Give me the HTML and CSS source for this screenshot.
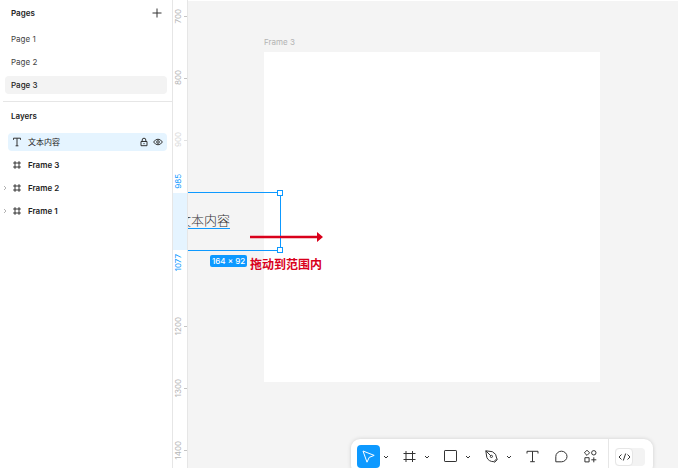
FILE: index.html
```html
<!DOCTYPE html>
<html lang="zh-CN">
<head>
    <meta charset="UTF-8">
    <meta name="viewport" content="width=device-width, initial-scale=1.0">
    <title>Page 3</title>
    <link rel="stylesheet" href="styles.css">
</head>

<body>
    <aside class="sidebar">
        <section class="pages">
            <div class="panel-header">
                <h2>Pages</h2>
                <button class="icon-button" type="button" aria-label="Add page">
                    <svg width="10" height="10" viewBox="0 0 10 10"><path d="M5 .5v9M.5 5h9"/></svg>
                </button>
            </div>
            <nav class="page-list">
                <a class="page" href="#page-1">Page 1</a>
                <a class="page" href="#page-2">Page 2</a>
                <a class="page current" href="#page-3">Page 3</a>
            </nav>
        </section>

        <section class="layers">
            <div class="panel-header">
                <h2>Layers</h2>
            </div>
            <ul class="layer-list">
                <li class="layer selected">
                    <svg width="10" height="10" viewBox="0 0 10 10"><path d="M1.5 2.8V1.2h7v1.6M5 1.2v7.6M3.6 8.8h2.8"/></svg>
                    <span class="layer-name">文本内容</span>
                    <button class="icon-button" type="button" aria-label="Lock">
                        <svg width="10" height="10" viewBox="0 0 10 10"><path d="M2 4.5h6v4.2H2zM3.2 4.5V3a1.8 1.8 0 0 1 3.6 0v1.5M5 6v1.2"/></svg>
                    </button>
                    <button class="icon-button" type="button" aria-label="Hide">
                        <svg width="10" height="10" viewBox="0 0 10 10"><path d="M.6 5Q2.4 2.2 5 2.2T9.4 5Q7.6 7.8 5 7.8T.6 5z"/><circle cx="5" cy="5" r="1.3"/></svg>
                    </button>
                </li>
                <li class="layer">
                    <svg width="10" height="10" viewBox="0 0 10 10"><path d="M3 1.2v7.6M7 1.2v7.6M1.2 3h7.6M1.2 7h7.6"/></svg>
                    <span class="layer-name">Frame 3</span>
                </li>
                <li class="layer">
                    <button class="expand" type="button" aria-label="Expand Frame 2">
                        <svg width="4" height="6" viewBox="0 0 4 6"><path d="M1 1l2 2-2 2"/></svg>
                    </button>
                    <svg width="10" height="10" viewBox="0 0 10 10"><path d="M3 1.2v7.6M7 1.2v7.6M1.2 3h7.6M1.2 7h7.6"/></svg>
                    <span class="layer-name">Frame 2</span>
                </li>
                <li class="layer">
                    <button class="expand" type="button" aria-label="Expand Frame 1">
                        <svg width="4" height="6" viewBox="0 0 4 6"><path d="M1 1l2 2-2 2"/></svg>
                    </button>
                    <svg width="10" height="10" viewBox="0 0 10 10"><path d="M3 1.2v7.6M7 1.2v7.6M1.2 3h7.6M1.2 7h7.6"/></svg>
                    <span class="layer-name">Frame 1</span>
                </li>
            </ul>
        </section>
    </aside>

    <div class="ruler">
        <div class="marks">
            <div class="mark"><span>700</span></div>
            <div class="mark"><span>800</span></div>
            <div class="mark faded"><span>900</span></div>
            <div class="mark hidden"></div>
            <div class="mark hidden"></div>
            <div class="mark"><span>1200</span></div>
            <div class="mark"><span>1300</span></div>
            <div class="mark"><span>1400</span></div>
        </div>
        <div class="range">
            <span class="range-start">985</span>
            <span class="range-end">1077</span>
        </div>
    </div>

    <main class="canvas">
        <div class="frame">
            <span class="frame-label">Frame 3</span>
        </div>

        <div class="selection">
            <span class="text-node">文本内容</span>
            <i class="handle handle-top"></i>
            <i class="handle handle-bottom"></i>
            <span class="size-badge">164 × 92</span>
        </div>

        <div class="note">
            <svg width="73" height="10" viewBox="0 0 73 10"><path d="M0 3.8h67V0l6 5-6 5V6.2H0z"/></svg>
            <p>拖动到范围内</p>
        </div>

        <div class="toolbar">
            <div class="tool-group">
                <button class="tool active" type="button" aria-label="Move">
                    <svg width="15" height="15" viewBox="0 0 15 15"><path d="M2 2l11.2 4.4-5 2L6 13.2z"/></svg>
                </button>
                <button class="more" type="button" aria-label="Move tools">
                    <svg width="6" height="4" viewBox="0 0 6 4"><path d="M1 1l2 2 2-2"/></svg>
                </button>
            </div>
            <div class="tool-group">
                <button class="tool" type="button" aria-label="Frame">
                    <svg width="15" height="15" viewBox="0 0 15 15"><path d="M4 2v11M10.5 2v11M1.5 4.5h12M1.5 10.5h12"/></svg>
                </button>
                <button class="more" type="button" aria-label="Region tools">
                    <svg width="6" height="4" viewBox="0 0 6 4"><path d="M1 1l2 2 2-2"/></svg>
                </button>
            </div>
            <div class="tool-group">
                <button class="tool" type="button" aria-label="Rectangle">
                    <svg width="15" height="15" viewBox="0 0 15 15"><rect x="1.5" y="1.5" width="12" height="11" rx=".6"/></svg>
                </button>
                <button class="more" type="button" aria-label="Shape tools">
                    <svg width="6" height="4" viewBox="0 0 6 4"><path d="M1 1l2 2 2-2"/></svg>
                </button>
            </div>
            <div class="tool-group">
                <button class="tool" type="button" aria-label="Pen">
                    <svg width="15" height="15" viewBox="0 0 15 15"><path d="M1.8 1.8l6.6.9q4.2 1.8 4.4 7L9.8 12.7Q4.6 12.6 2.8 8.4zM1.8 1.8l5 5M9.8 12.7l.9.5 2.6-2.6-.5-.9"/><circle cx="7.4" cy="7.4" r="1.1"/></svg>
                </button>
                <button class="more" type="button" aria-label="Drawing tools">
                    <svg width="6" height="4" viewBox="0 0 6 4"><path d="M1 1l2 2 2-2"/></svg>
                </button>
            </div>
            <button class="tool" type="button" aria-label="Text">
                <svg width="15" height="15" viewBox="0 0 15 15"><path d="M2 4.5V2.3h11v2.2M7.5 2.3v10.4M5.2 12.7h4.6"/></svg>
            </button>
            <button class="tool" type="button" aria-label="Comment">
                <svg width="15" height="15" viewBox="0 0 15 15"><path d="M1.8 12.8V7.5a5.6 5.3 0 1 1 5.6 5.3z"/></svg>
            </button>
            <button class="tool" type="button" aria-label="Actions">
                <svg width="15" height="15" viewBox="0 0 15 15"><path d="M4 1.2l2.6 2.6L4 6.4 1.4 3.8zM1.9 8.7h4.2v4.2H1.9zM10.8 8.3v5M8.3 10.8h5"/><circle cx="10.8" cy="3.8" r="2.2"/></svg>
            </button>
            <label class="dev-mode">
                <input type="checkbox" aria-label="Dev Mode">
                <span class="knob">
                    <svg width="13" height="10" viewBox="0 0 13 10"><path d="M3.5 2.5L1 5l2.5 2.5M9.5 2.5L12 5 9.5 7.5M7.7 1.5l-2.4 7"/></svg>
                </span>
            </label>
        </div>
    </main>
</body>
</html>
```
FILE: styles.css
```css
* {
    box-sizing: border-box;
}

body {
    margin: 0;
    height: 100vh;
    display: flex;
    overflow: hidden;
    font-family: Inter, "Noto Sans CJK SC", sans-serif;
    font-size: 8px;
    line-height: 12px;
    color: #333;
    background: #fff;
}

button {
    display: flex;
    align-items: center;
    justify-content: center;
    padding: 0;
    border: 0;
    background: none;
    color: #333;
}

svg {
    flex: none;
    fill: none;
    stroke: currentColor;
    stroke-linejoin: round;
}

h2 {
    margin: 0;
    font-size: 8px;
    font-weight: 600;
    color: #222;
}

/* Left panel */
.sidebar {
    flex: none;
    width: 173px;
    border-right: 1px solid #e6e6e6;
}

.panel-header {
    display: flex;
    align-items: center;
    justify-content: space-between;
    height: 26px;
    padding: 0 10px 0 11px;
}

.pages {
    height: 102px;
    margin-left: 3px;
    border-bottom: 1px solid #e6e6e6;
}

.pages .panel-header {
    padding-left: 8px;
}

.page-list {
    display: flex;
    flex-direction: column;
    gap: 5px;
    padding: 4px 5px 0 2px;
}

.page {
    height: 18px;
    padding: 3px 6px;
    border-radius: 4px;
    color: #444;
    text-decoration: none;
}

.page.current {
    background: #f3f3f3;
    color: #222;
    font-weight: 500;
}

.layers {
    padding-top: 1px;
}

.layer-list {
    display: flex;
    flex-direction: column;
    gap: 5px;
    margin: 0;
    padding: 4px 5px 0 8px;
    list-style: none;
}

.layer {
    position: relative;
    display: flex;
    align-items: center;
    gap: 4px;
    height: 18px;
    padding: 0 4px;
    border-radius: 4px;
}

.layer.selected {
    background: #e5f4ff;
}

.layer-name {
    flex: 1;
    padding-left: 2px;
    font-weight: 600;
    color: #222;
}

.selected .layer-name {
    font-weight: 400;
}

.expand {
    position: absolute;
    left: -5px;
    color: #b3b3b3;
}

/* Vertical ruler */
.ruler {
    position: relative;
    flex: none;
    width: 15px;
    border-right: 1px solid #e6e6e6;
    line-height: 10px;
    color: #b5b5b5;
}

.marks {
    display: flex;
    flex-direction: column;
    height: calc(100% + 28px);
    margin-top: -15px;
}

.mark {
    flex: 1;
    display: flex;
    align-items: center;
    justify-content: space-between;
}

.mark::after {
    content: "";
    width: 3px;
    height: 1px;
    background: #c4c4c4;
}

.mark.faded {
    opacity: 0.5;
}

.mark.hidden {
    visibility: hidden;
}

.ruler span {
    writing-mode: vertical-rl;
    transform: rotate(180deg);
}

.range {
    position: absolute;
    top: 193px;
    left: 0;
    width: 14px;
    height: 57px;
    background: #e5f4ff;
    color: #0d99ff;
}

.range-start,
.range-end {
    position: absolute;
    left: 0;
}

.range-start {
    bottom: 100%;
    padding-top: 4px;
}

.range-end {
    top: 100%;
    padding-bottom: 4px;
}

/* Canvas */
.canvas {
    position: relative;
    flex: 1;
    margin: 1px 2px 0 0;
    overflow: hidden;
    background: #f4f4f4;
}

.frame {
    position: absolute;
    top: 51px;
    left: 76px;
    width: 336px;
    height: 330px;
    background: #fff;
}

.frame-label {
    position: absolute;
    bottom: 100%;
    left: 0;
    padding-bottom: 4px;
    color: #b3b3b3;
}

.selection {
    position: absolute;
    top: 191px;
    left: -11px;
    display: flex;
    align-items: center;
    width: 104px;
    height: 59px;
    border: 1px solid #0d99ff;
}

.text-node {
    height: 15px;
    border-bottom: 1px solid #0d99ff;
    font-family: "Noto Sans CJK SC", sans-serif;
    font-size: 13px;
    font-weight: 300;
    line-height: 12px;
}

.handle {
    position: absolute;
    right: -3px;
    width: 6px;
    height: 6px;
    border: 1px solid #0d99ff;
    background: #fff;
}

.handle-top {
    top: -3px;
}

.handle-bottom {
    bottom: -3px;
}

.size-badge {
    position: absolute;
    top: 62px;
    left: 32px;
    padding: 0 2px;
    border-radius: 2px;
    background: #0d99ff;
    color: #fff;
    font-weight: 500;
    white-space: nowrap;
}

.note {
    position: absolute;
    top: 231px;
    left: 62px;
    color: #d9001b;
    font-size: 12px;
    font-weight: 700;
    line-height: 18px;
}

.note svg {
    display: block;
    fill: currentColor;
    stroke: none;
}

.note p {
    margin: 14px 0 0;
}

/* Bottom toolbar */
.toolbar {
    position: absolute;
    bottom: -6px;
    left: 163px;
    display: flex;
    gap: 6px;
    height: 35px;
    padding: 6px 8px 6px 6px;
    border-radius: 9px;
    background: #fff;
    box-shadow: 0 0 4px rgba(0, 0, 0, 0.15);
}

.tool-group {
    display: flex;
}

.tool {
    width: 23px;
    height: 23px;
    border-radius: 4px;
}

.tool.active {
    background: #0d99ff;
    color: #fff;
}

.more {
    width: 12px;
}

.dev-mode {
    display: flex;
    align-items: center;
    margin: -6px 0;
    padding-left: 6px;
    border-left: 1px solid #e6e6e6;
}

.dev-mode input {
    appearance: none;
    width: 30px;
    height: 18px;
    margin: 0;
    border-radius: 4px;
    background: #f3f3f3;
}

.knob {
    display: flex;
    align-items: center;
    justify-content: center;
    width: 18px;
    height: 18px;
    margin-left: -30px;
    margin-right: 12px;
    border: 1px solid #e6e6e6;
    border-radius: 4px;
    background: #fff;
    z-index: 1;
}
```
